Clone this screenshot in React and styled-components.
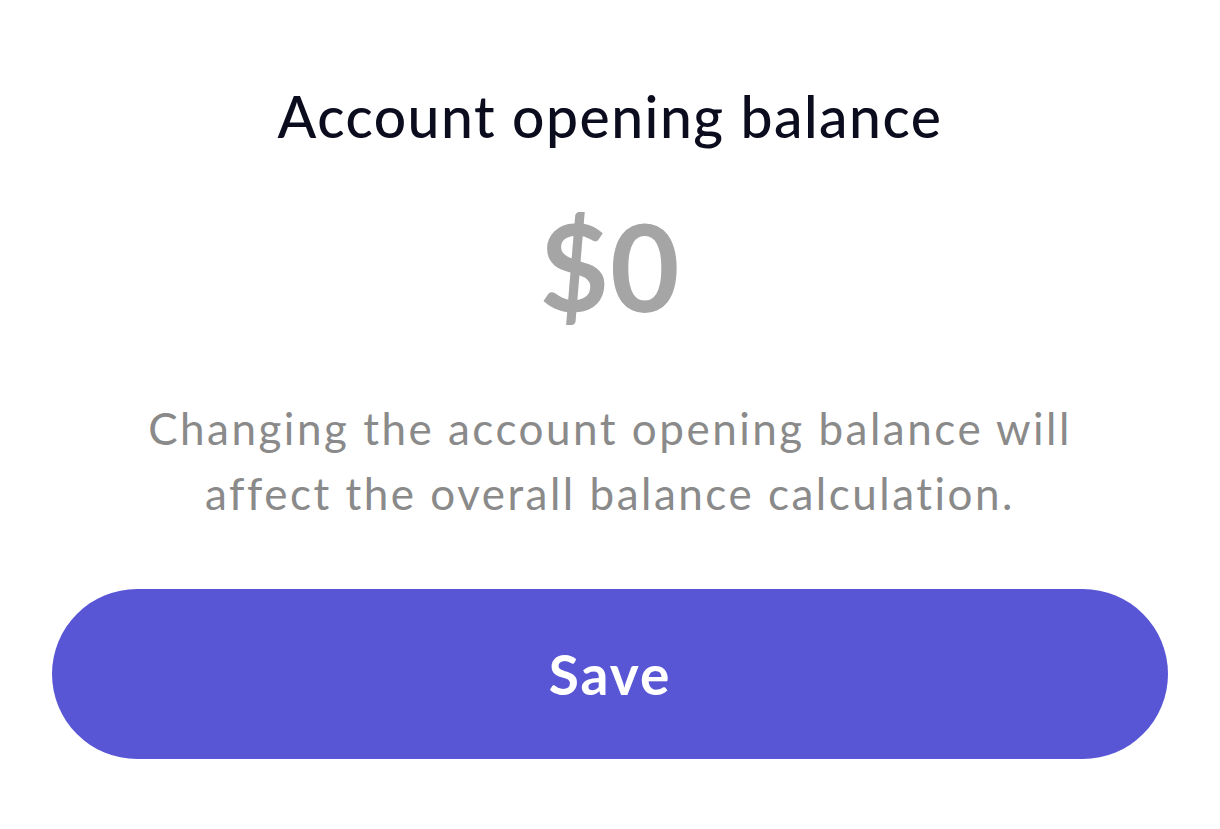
import React from 'react'
import styled, { createGlobalStyle } from 'styled-components'

const GlobalStyle = createGlobalStyle`
    html, body {
        margin: 0;
        padding: 0;
        background: #ffffff;
        font-family: Lato, "Noto Sans", sans-serif;
    }
`;

const Sheet = styled.div`
    display: flex;
    flex-direction: column;
    align-items: center;
    padding: 80px 52px 0;
`;

const Title = styled.h2`
    margin: 0;
    font-size: 57px;
    font-weight: 500;
    line-height: 72px;
    color: #0c0c1f;
    letter-spacing: 1.5px;
`;

const Amount = styled.div`
    margin-top: 44px;
    font-size: 120px;
    font-weight: 700;
    line-height: 140px;
    color: #a5a5a5;
    letter-spacing: 1px;
`;

const Note = styled.p`
    margin: 60px 0 0;
    font-size: 44px;
    line-height: 65px;
    color: #8a8a8a;
    text-align: center;
    letter-spacing: 2.5px;
`;

const SaveButton = styled.button`
    margin-top: 63px;
    width: 100%;
    height: 170px;
    border: none;
    border-radius: 85px;
    background: #5956d6;
    color: #ffffff;
    font-family: inherit;
    font-size: 55px;
    font-weight: 700;
    letter-spacing: 2px;
    cursor: pointer;
`;

export default function App() {
    return (
        <>
            <GlobalStyle />
            <Sheet>
                <Title>Account opening balance</Title>
                <Amount>$0</Amount>
                <Note>
                    Changing the account opening balance will<br />
                    affect the overall balance calculation.
                </Note>
                <SaveButton>Save</SaveButton>
            </Sheet>
        </>
    );
}
